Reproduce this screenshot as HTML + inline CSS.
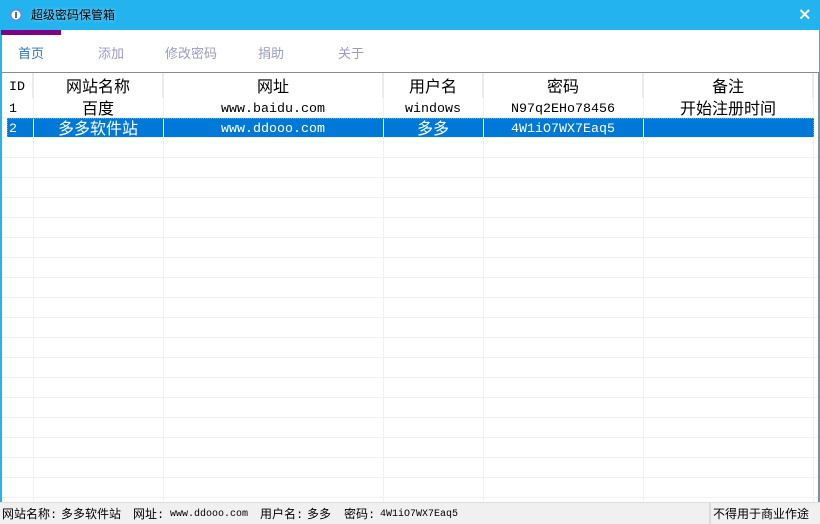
<!DOCTYPE html>
<html><head><meta charset="utf-8"><style>
html,body{margin:0;padding:0;background:#fff}
#w{position:relative;width:820px;height:524px;overflow:hidden;background:#fff;font-family:"Liberation Mono","WenQuanYi Zen Hei","Noto Sans CJK SC",monospace;color:#000}
#w div{position:absolute;white-space:nowrap}
.t{text-align:center;font-size:16px;line-height:20px}
.l{font-size:13.33px}
.n{font-family:"Liberation Sans","Noto Sans CJK SC",sans-serif;font-size:13px;line-height:18px;top:45px;color:#9a9ac4}
.s{font-size:12px;line-height:16px;top:507px;color:#000}
.m{font-size:10px}
.w{color:#fff}
.g{background:#f0f0f0}
.h{background:#ebebeb}
.d{background:repeating-linear-gradient(to right,#f08a1c 0,#f08a1c 1px,#0078d7 1px,#0078d7 2px)}
.v{background:repeating-linear-gradient(to bottom,#f08a1c 0,#f08a1c 1px,#0078d7 1px,#0078d7 2px)}
</style></head><body><div id="w">
<div style="left:0;top:0;width:820px;height:30px;background:#23b4f0"></div>
<div style="left:0;top:30px;width:2px;height:472px;background:#23b4f0"></div>
<div style="left:819px;top:30px;width:1px;height:472px;background:#23b4f0"></div>
<div style="left:1px;top:30px;width:60px;height:5px;background:#800080"></div>
<svg style="position:absolute;left:9px;top:8px" width="14" height="14"><circle cx="7" cy="7" r="5.5" fill="#fff" stroke="#5b8fe8" stroke-width="2"/><rect x="6" y="4" width="2" height="6" fill="#3b6fd8"/></svg>
<div style="left:31px;top:7px;font-family:'Liberation Sans','Noto Sans CJK SC',sans-serif;font-size:12px;line-height:16px;color:#000;text-shadow:0 0 3px rgba(255,255,255,.55)">超级密码保管箱</div>
<svg style="position:absolute;left:799px;top:8px" width="12" height="12"><path d="M1.5 2L10 10.5M10 2L1.5 10.5" stroke="#fff" stroke-width="2"/></svg>
<div class="n" style="left:18px;color:#2f74c0">首页</div>
<div class="n" style="left:98px">添加</div>
<div class="n" style="left:165px">修改密码</div>
<div class="n" style="left:258px">捐助</div>
<div class="n" style="left:338px">关于</div>

<div style="left:2px;top:72px;width:817px;height:1px;background:#8c8c8c"></div>
<div style="left:818px;top:72px;width:1px;height:430px;background:#8c8c8c"></div>

<div class="h" style="left:32px;top:73px;width:2px;height:25px"></div>
<div class="h" style="left:162px;top:73px;width:2px;height:25px"></div>
<div class="h" style="left:382px;top:73px;width:2px;height:25px"></div>
<div class="h" style="left:482px;top:73px;width:2px;height:25px"></div>
<div class="h" style="left:642px;top:73px;width:2px;height:25px"></div>
<div class="h" style="left:812px;top:73px;width:2px;height:25px"></div>

<div style="left:2px;top:117px;width:816px;height:380px;background:repeating-linear-gradient(to bottom,#f0f0f0 0,#f0f0f0 1px,transparent 1px,transparent 20px)"></div>
<div class="g" style="left:2px;top:497px;width:816px;height:1px"></div>
<div class="g" style="left:33px;top:98px;width:1px;height:404px"></div>
<div class="g" style="left:163px;top:98px;width:1px;height:404px"></div>
<div class="g" style="left:383px;top:98px;width:1px;height:404px"></div>
<div class="g" style="left:483px;top:98px;width:1px;height:404px"></div>
<div class="g" style="left:643px;top:98px;width:1px;height:404px"></div>
<div class="g" style="left:813px;top:98px;width:1px;height:404px"></div>

<div style="left:7px;top:118px;width:807px;height:19px;background:#0078d7"></div>
<div class="d" style="left:7px;top:118px;width:807px;height:1px"></div>
<div class="v" style="left:7px;top:118px;width:1px;height:19px"></div>
<div class="v" style="left:813px;top:118px;width:1px;height:19px"></div>
<div style="left:33px;top:119px;width:1px;height:18px;background:#fff"></div>
<div style="left:163px;top:119px;width:1px;height:18px;background:#fff"></div>
<div style="left:383px;top:119px;width:1px;height:18px;background:#fff"></div>
<div style="left:483px;top:119px;width:1px;height:18px;background:#fff"></div>
<div style="left:643px;top:119px;width:1px;height:18px;background:#fff"></div>

<div class="t l" style="left:9px;top:78px">ID</div>
<div class="t" style="left:33px;top:78px;width:130px">网站名称</div>
<div class="t" style="left:163px;top:78px;width:220px">网址</div>
<div class="t" style="left:383px;top:78px;width:100px">用户名</div>
<div class="t" style="left:483px;top:78px;width:160px">密码</div>
<div class="t" style="left:643px;top:78px;width:170px">备注</div>

<div class="t l" style="left:9px;top:100px">1</div>
<div class="t" style="left:33px;top:100px;width:130px">百度</div>
<div class="t l" style="left:163px;top:100px;width:220px">www.baidu.com</div>
<div class="t l" style="left:383px;top:100px;width:100px">windows</div>
<div class="t l" style="left:483px;top:100px;width:160px">N97q2EHo78456</div>
<div class="t" style="left:643px;top:100px;width:170px">开始注册时间</div>

<div class="t l w" style="left:9px;top:120px">2</div>
<div class="t w" style="left:33px;top:120px;width:130px">多多软件站</div>
<div class="t l w" style="left:163px;top:120px;width:220px">www.ddooo.com</div>
<div class="t w" style="left:383px;top:120px;width:100px">多多</div>
<div class="t l w" style="left:483px;top:120px;width:160px">4W1iO7WX7Eaq5</div>

<div style="left:0;top:502px;width:820px;height:22px;background:#f0f0f0"></div>
<div style="left:0;top:502px;width:820px;height:1px;background:#dcdcdc"></div>
<div style="left:709px;top:503px;width:2px;height:21px;background:#dcdcdc"></div>
<div class="s" style="left:2px">网站名称:</div>
<div class="s" style="left:61px">多多软件站</div>
<div class="s" style="left:133px">网址:</div>
<div class="s m" style="left:170px">www.ddooo.com</div>
<div class="s" style="left:260px">用户名:</div>
<div class="s" style="left:307px">多多</div>
<div class="s" style="left:344px">密码:</div>
<div class="s m" style="left:380px">4W1iO7WX7Eaq5</div>
<div class="s" style="left:713px">不得用于商业作途</div>
</div></body></html>
